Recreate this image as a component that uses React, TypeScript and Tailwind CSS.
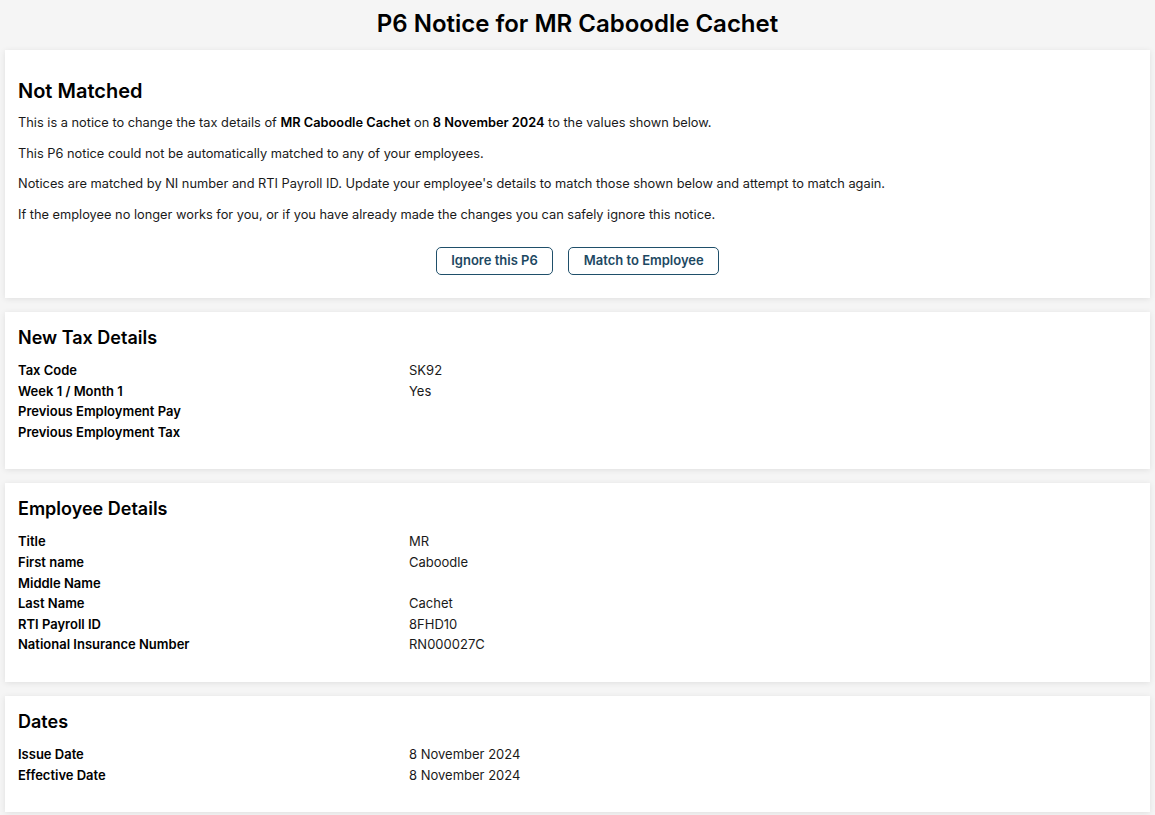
import React from 'react';

type Row = { label: string; value?: string };

const taxRows: Row[] = [
  { label: 'Tax Code', value: 'SK92' },
  { label: 'Week 1 / Month 1', value: 'Yes' },
  { label: 'Previous Employment Pay' },
  { label: 'Previous Employment Tax' },
];

const employeeRows: Row[] = [
  { label: 'Title', value: 'MR' },
  { label: 'First name', value: 'Caboodle' },
  { label: 'Middle Name' },
  { label: 'Last Name', value: 'Cachet' },
  { label: 'RTI Payroll ID', value: '8FHD10' },
  { label: 'National Insurance Number', value: 'RN000027C' },
];

const dateRows: Row[] = [
  { label: 'Issue Date', value: '8 November 2024' },
  { label: 'Effective Date', value: '8 November 2024' },
];

const Card: React.FC<{ className?: string; children: React.ReactNode }> = ({ className = '', children }) => (
  <section className={`bg-white shadow-[0_1px_6px_rgba(0,0,0,0.09)] px-[13px] ${className}`}>{children}</section>
);

const DetailCard: React.FC<{ title: string; rows: Row[] }> = ({ title, rows }) => (
  <Card className="pt-[14px] pb-[27px]">
    <h2 className="text-[18px] font-semibold text-black leading-[24px] mb-[10px]">{title}</h2>
    <dl className="text-[13px] leading-[20.6px]">
      {rows.map((row) => (
        <div key={row.label} className="flex">
          <dt className="w-[391px] shrink-0 font-semibold text-black">{row.label}</dt>
          <dd className="text-[#1a1a1a]">{row.value ?? ''}</dd>
        </div>
      ))}
    </dl>
  </Card>
);

export default function App() {
  return (
    <div className="min-h-screen bg-[#f5f5f5] px-[5px] pb-[4px] font-['Inter',sans-serif] text-[#1a1a1a]">
      <h1 className="text-center text-[24px] font-semibold text-black leading-[46px] pt-[1px] mb-[3px]">
        P6 Notice for MR Caboodle Cachet
      </h1>

      <div className="flex flex-col gap-[14px]">
        <Card className="pt-[28px] pb-[23px]">
          <h2 className="text-[20px] font-semibold text-black leading-[26px] mb-[9px]">Not Matched</h2>
          <div className="text-[12.8px] leading-[20px] flex flex-col gap-[10.7px]">
            <p>
              This is a notice to change the tax details of <b className="font-semibold text-black">MR Caboodle Cachet</b> on{' '}
              <b className="font-semibold text-black">8 November 2024</b> to the values shown below.
            </p>
            <p>This P6 notice could not be automatically matched to any of your employees.</p>
            <p>
              Notices are matched by NI number and RTI Payroll ID. Update your employee's details to match those shown below and
              attempt to match again.
            </p>
            <p>If the employee no longer works for you, or if you have already made the changes you can safely ignore this notice.</p>
          </div>
          <div className="flex justify-center gap-[15px] mt-[22px]">
            <button className="h-[28px] px-[14.5px] rounded-[5px] border border-[#1f4f6a] text-[#1d4862] text-[13px] font-semibold bg-white">
              Ignore this P6
            </button>
            <button className="h-[28px] px-[14.5px] rounded-[5px] border border-[#1f4f6a] text-[#1d4862] text-[13px] font-semibold bg-white">
              Match to Employee
            </button>
          </div>
        </Card>

        <DetailCard title="New Tax Details" rows={taxRows} />
        <DetailCard title="Employee Details" rows={employeeRows} />
        <DetailCard title="Dates" rows={dateRows} />
      </div>
    </div>
  );
}
